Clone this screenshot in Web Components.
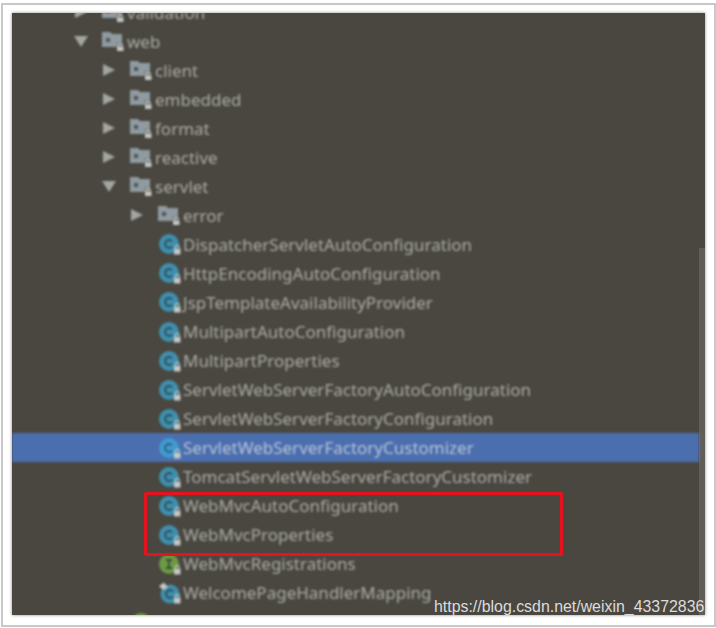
<!DOCTYPE html>
<html>
<head>
<meta charset="utf-8">
<style>
  html, body { margin: 0; height: 100%; background: #fff; overflow: hidden; }
</style>
</head>
<body>
<shot-frame>
  <tree-panel>
    <tree-row depth="0" arrow="right" icon="folder">validation</tree-row>
    <tree-row depth="0" arrow="down" icon="folder">web</tree-row>
    <tree-row depth="1" arrow="right" icon="folder">client</tree-row>
    <tree-row depth="1" arrow="right" icon="folder">embedded</tree-row>
    <tree-row depth="1" arrow="right" icon="folder">format</tree-row>
    <tree-row depth="1" arrow="right" icon="folder">reactive</tree-row>
    <tree-row depth="1" arrow="down" icon="folder">servlet</tree-row>
    <tree-row depth="2" arrow="right" icon="folder">error</tree-row>
    <tree-row depth="2" icon="class">DispatcherServletAutoConfiguration</tree-row>
    <tree-row depth="2" icon="class">HttpEncodingAutoConfiguration</tree-row>
    <tree-row depth="2" icon="class">JspTemplateAvailabilityProvider</tree-row>
    <tree-row depth="2" icon="class">MultipartAutoConfiguration</tree-row>
    <tree-row depth="2" icon="class">MultipartProperties</tree-row>
    <tree-row depth="2" icon="class">ServletWebServerFactoryAutoConfiguration</tree-row>
    <tree-row depth="2" icon="class">ServletWebServerFactoryConfiguration</tree-row>
    <tree-row depth="2" icon="class" selected>ServletWebServerFactoryCustomizer</tree-row>
    <tree-row depth="2" icon="class">TomcatServletWebServerFactoryCustomizer</tree-row>
    <tree-row depth="2" icon="class">WebMvcAutoConfiguration</tree-row>
    <tree-row depth="2" icon="class">WebMvcProperties</tree-row>
    <tree-row depth="2" icon="iface">WebMvcRegistrations</tree-row>
    <tree-row depth="2" icon="pinned">WelcomePageHandlerMapping</tree-row>
    <tree-row depth="1" icon="green"></tree-row>
  </tree-panel>
</shot-frame>

<script>
const LOCK = (y) => `
    <rect x="16" y="${y + 3}" width="6.5" height="5.5" fill="#c6c8c6"/>
    <path d="M17.3 ${y + 3}v-1.6a2 2 0 0 1 4 0v1.6" fill="none" stroke="#c6c8c6" stroke-width="1.1"/>`;

const ICONS = {
  folder: `<svg width="22" height="20" viewBox="0 0 22 20">
    <path d="M0 1h8l2 2h10v13H0z" fill="#8f9ba0"/>
    <rect x="4" y="7" width="4" height="4" fill="#50565a"/>
    <rect x="14.5" y="11" width="7.5" height="9" fill="#4a4740" opacity=".35"/>
    <g transform="translate(-1 1)">${LOCK(12)}</g>
  </svg>`,
  class: `<svg width="24" height="24" viewBox="0 0 24 24">
    <circle cx="11" cy="12" r="10" fill="var(--badge, #3f8fae)"/>
    <path d="M14 9.2a4 4 0 1 0 0 5.6" fill="none" stroke="var(--glyph, #2f4f59)" stroke-width="2"/>
    ${LOCK(14)}
  </svg>`,
  iface: `<svg width="24" height="24" viewBox="0 0 24 24">
    <circle cx="11" cy="12" r="10" fill="#6a9a45"/>
    <path d="M8 8h6M11 8v8M8 16h6" fill="none" stroke="#3c4a34" stroke-width="1.8"/>
    ${LOCK(14)}
  </svg>`,
  pinned: `<svg width="24" height="24" viewBox="0 0 24 24">
    <circle cx="12" cy="13" r="9.5" fill="#3f8fae"/>
    <path d="M15 10.2a4 4 0 1 0 0 5.6" fill="none" stroke="#2f4f59" stroke-width="2"/>
    <path d="M1 5l5-3.5 4 5-5 2.5z" fill="#c4c8c8"/>
    ${LOCK(14)}
  </svg>`,
  green: `<svg width="24" height="24" viewBox="0 0 24 24"><circle cx="11" cy="13" r="10" fill="#6a9a45"/></svg>`
};

class TreeRow extends HTMLElement {
  constructor() {
    super();
    this.attachShadow({mode: 'open'});
    this.shadowRoot.innerHTML = `
      <style>
        :host {
          display: flex;
          align-items: center;
          height: 29.05px;
          padding-left: calc(62px + var(--depth) * 28px);
          color: #aaaba6;
          font: 17px "Noto Sans", "Open Sans", sans-serif;
          white-space: nowrap;
        }
        :host([selected]) { background: #4b6eaf; color: #b9c4d6; --badge: #3f9bcf; --glyph: #2d5f86; }
        .arrow { width: 14px; height: 14px; margin-right: 14px; flex: none; }
        .icon { width: 24px; height: 24px; margin-right: 1px; display: flex; align-items: center; flex: none; }
        svg { display: block; }
      </style>
      <svg class="arrow" viewBox="0 0 14 14"></svg>
      <span class="icon"></span>
      <slot></slot>
    `;
  }
  connectedCallback() {
    this.style.setProperty('--depth', this.getAttribute('depth') || 0);
    const arrow = this.shadowRoot.querySelector('.arrow');
    const dir = this.getAttribute('arrow');
    if (dir == 'right') arrow.innerHTML = '<path d="M1 1l12 6-12 6z" fill="#a3a5a1"/>';
    if (dir == 'down') arrow.innerHTML = '<path d="M0 2h14l-7 11z" fill="#a3a5a1"/>';
    this.shadowRoot.querySelector('.icon').innerHTML = ICONS[this.getAttribute('icon')];
  }
}

class TreePanel extends HTMLElement {
  constructor() {
    super();
    this.attachShadow({mode: 'open'});
    this.shadowRoot.innerHTML = `
      <style>
        :host {
          display: block;
          position: relative;
          height: 602px;
          background: #4a4740;
          overflow: hidden;
          box-shadow: 0 0 3px #8a8a86;
        }
        .list { margin-top: -15.5px; margin-right: 6px; filter: blur(.8px); }
        .scroll {
          position: absolute; right: 0; top: 235px; bottom: 0; width: 6px;
          background: rgba(255,255,255,.13);
        }
        .mark {
          position: absolute; left: 422px; bottom: -2px;
          color: #dcdcdc;
          font: 15.9px/20px "Liberation Sans", sans-serif;
          white-space: nowrap;
        }
        .outline {
          position: absolute; left: 132px; top: 479px; width: 413px; height: 58px;
          border: 3px solid #e5131d; border-radius: 2px;
        }
      </style>
      <div class="list"><slot></slot></div>
      <div class="scroll"></div>
      <div class="outline"></div>
      <div class="mark">https://blog.csdn.net/weixin_43372836</div>
    `;
  }
}

class ShotFrame extends HTMLElement {
  constructor() {
    super();
    this.attachShadow({mode: 'open'});
    this.shadowRoot.innerHTML = `
      <style>
        :host {
          display: block;
          box-sizing: border-box;
          width: 715px;
          height: 624px;
          margin: 3px 0 0 1px;
          padding: 8px 9px 0 9px;
          background: #fff;
          border: 2px solid #c8c8c8;
        }
      </style>
      <slot></slot>
    `;
  }
}

customElements.define('tree-row', TreeRow);
customElements.define('tree-panel', TreePanel);
customElements.define('shot-frame', ShotFrame);
</script>
</body>
</html>
